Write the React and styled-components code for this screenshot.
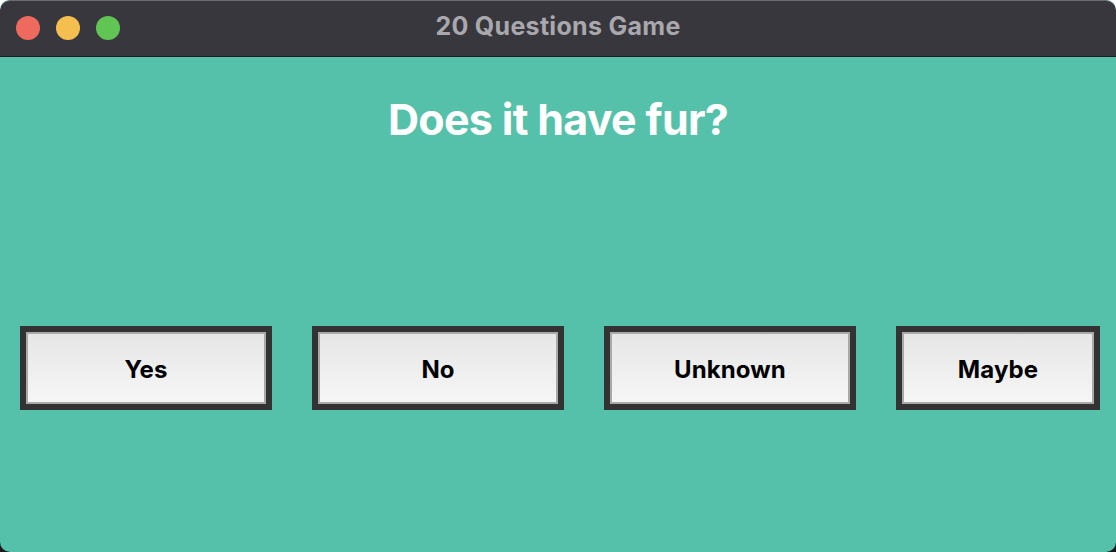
import React from "react";
import styled, { createGlobalStyle } from "styled-components";

const Global = createGlobalStyle`
  html, body { margin: 0; padding: 0; }
  body {
    width: 1116px;
    height: 552px;
    overflow: hidden;
    background: linear-gradient(#ffffff 50%, #1a1a1a 50%);
    font-family: Inter, "Liberation Sans", sans-serif;
  }
`;

const Window = styled.div`
  width: 1116px;
  height: 552px;
  border-radius: 10px;
  overflow: hidden;
  display: flex;
  flex-direction: column;
  background: #56c1aa;
`;

const TitleBar = styled.div`
  height: 55px;
  flex: none;
  background: #38373d;
  border-top: 1px solid #6d6c71;
  border-bottom: 1px solid #1c1c1e;
  border-radius: 10px 10px 0 0;
  position: relative;
  display: flex;
  align-items: center;
  justify-content: center;
`;

const Lights = styled.div`
  position: absolute;
  left: 16px;
  top: 15px;
  display: flex;
  gap: 16px;
`;

const Light = styled.span`
  width: 24px;
  height: 24px;
  border-radius: 50%;
  background: ${(p) => p.$c};
`;

const Title = styled.div`
  color: #a9a8ad;
  font-weight: 700;
  font-size: 25px;
  line-height: 30px;
  letter-spacing: 0.3px;
  margin-top: -5px;
`;

const Body = styled.div`
  flex: 1;
  display: flex;
  flex-direction: column;
  align-items: stretch;
`;

const Question = styled.h1`
  margin: 37px 0 0;
  text-align: center;
  color: #ffffff;
  font-size: 43px;
  line-height: 50px;
  font-weight: 700;
  letter-spacing: -0.7px;
`;

const Row = styled.div`
  margin-top: 182px;
  padding: 0 16px 0 20px;
  display: grid;
  grid-template-columns: 252px 252px 252px 1fr;
  column-gap: 40px;
`;

const Btn = styled.button`
  height: 84px;
  box-sizing: border-box;
  border: 6px solid #333333;
  padding: 0;
  background: #333333;
  display: flex;
  cursor: pointer;
`;

const BtnFace = styled.span`
  flex: 1;
  box-sizing: border-box;
  border: 2px solid #a9a9a9;
  padding-top: 3px;
  background: linear-gradient(#e6e6e6, #f6f6f6);
  display: flex;
  align-items: center;
  justify-content: center;
  font-family: Inter, "Liberation Sans", sans-serif;
  font-size: 24px;
  font-weight: 700;
  color: #000000;
  letter-spacing: 0.1px;
`;

const answers = ["Yes", "No", "Unknown", "Maybe"];

export default function App() {
  return (
    <>
      <Global />
      <Window>
        <TitleBar>
          <Lights>
            <Light $c="#ee6a5f" />
            <Light $c="#f5bf4f" />
            <Light $c="#61c554" />
          </Lights>
          <Title>20 Questions Game</Title>
        </TitleBar>
        <Body>
          <Question>Does it have fur?</Question>
          <Row>
            {answers.map((a) => (
              <Btn key={a}>
                <BtnFace>{a}</BtnFace>
              </Btn>
            ))}
          </Row>
        </Body>
      </Window>
    </>
  );
}
